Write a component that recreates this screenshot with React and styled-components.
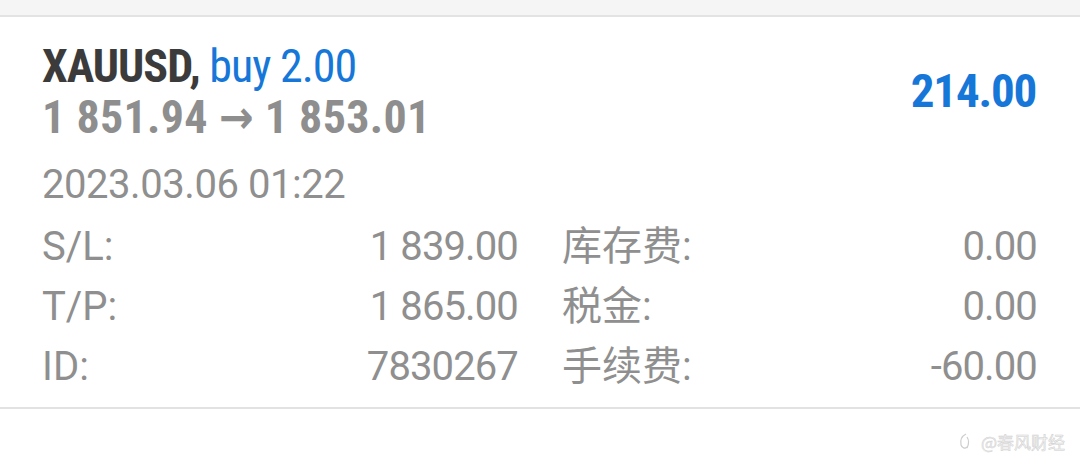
import React from "react";
import styled, { createGlobalStyle } from "styled-components";

const Global = createGlobalStyle`
  html, body { margin: 0; padding: 0; background: #ffffff; }
  body { width: 1080px; height: 475px; overflow: hidden; font-family: Roboto, "Noto Sans CJK SC", sans-serif; }
`;

const Page = styled.div`
  display: flex;
  flex-direction: column;
  width: 1080px;
  height: 475px;
  background: #ffffff;
`;

const TopBand = styled.div`
  height: 15px;
  background: #f5f5f5;
  border-bottom: 2px solid #e3e3e3;
`;

const Card = styled.div`
  display: flex;
  flex-direction: column;
  padding: 24px 44px 10px 42px;
  background: #ffffff;
  border-bottom: 2px solid #e2e2e2;
`;

const Header = styled.div`
  display: flex;
  align-items: center;
  justify-content: space-between;
`;

const TitleBlock = styled.div`
  display: flex;
  flex-direction: column;
`;

const CondLine = styled.div`
  font-family: "Roboto Condensed", "Liberation Sans Narrow", "DejaVu Sans Condensed", Roboto, sans-serif;
  font-weight: 700;
  font-size: 46px;
  line-height: 51px;
  white-space: nowrap;
  letter-spacing: ${(p) => p.$spacing || "0px"};
  color: ${(p) => p.$color || "#3b3b3b"};
`;

const Blue = styled.span`
  color: #1677d9;
  font-weight: 400;
`;

const Profit = styled.div`
  font-family: "Roboto Condensed", "Liberation Sans Narrow", "DejaVu Sans Condensed", Roboto, sans-serif;
  font-weight: 700;
  font-size: 47px;
  line-height: 51px;
  letter-spacing: -1.2px;
  color: #1677d9;
  margin-top: -4px;
`;

const DateLine = styled.div`
  margin-top: 12px;
  font-size: 40px;
  line-height: 60px;
  letter-spacing: -0.45px;
  color: #8f8f8f;
  margin-bottom: 2px;
`;

const Grid = styled.div`
  display: grid;
  grid-template-columns: 475px 474px;
  column-gap: 45px;
`;

const Cell = styled.div`
  display: flex;
  justify-content: space-between;
  font-size: 40px;
  line-height: 60px;
  height: 60px;
  color: #8f8f8f;
  white-space: nowrap;
`;

const Label = styled.span`
  font-family: Roboto, "Noto Sans CJK SC", sans-serif;
`;

const Value = styled.span`
  letter-spacing: -0.9px;
  margin-right: -0.9px;
`;

const Watermark = styled.div`
  display: flex;
  justify-content: flex-end;
  align-items: center;
  gap: 9px;
  padding: 20px 15px 0 0;
  font-family: "Noto Sans CJK SC", sans-serif;
  font-size: 17px;
  color: #f4f4f4;
  -webkit-text-stroke: 0.5px #cfcfcf;
`;

const rows = [
  ["S/L:", "1 839.00", "库存费:", "0.00"],
  ["T/P:", "1 865.00", "税金:", "0.00"],
  ["ID:", "7830267", "手续费:", "-60.00"],
];

export default function App() {
  return (
    <Page>
      <Global />
      <TopBand />
      <Card>
        <Header>
          <TitleBlock>
            <CondLine $spacing="-1px">
              XAUUSD, <Blue>buy 2.00</Blue>
            </CondLine>
            <CondLine $color="#8e8e8e" $spacing="0.3px">
              1 851.94 → 1 853.01
            </CondLine>
          </TitleBlock>
          <Profit>214.00</Profit>
        </Header>
        <DateLine>2023.03.06 01:22</DateLine>
        <Grid>
          {rows.map((r) => (
            <React.Fragment key={r[0]}>
              <Cell>
                <Label>{r[0]}</Label>
                <Value>{r[1]}</Value>
              </Cell>
              <Cell>
                <Label>{r[2]}</Label>
                <Value>{r[3]}</Value>
              </Cell>
            </React.Fragment>
          ))}
        </Grid>
      </Card>
      <Watermark>
        <svg width="14" height="20" viewBox="0 0 14 20" fill="none" stroke="#cdcdcd" strokeWidth="1.2">
          <path d="M8 2c-4 2-6 6-5 11 1 3 4 4 6 2" />
          <path d="M9 5c2 3 2 7 0 11" />
        </svg>
        <span>@春风财经</span>
      </Watermark>
    </Page>
  );
}
